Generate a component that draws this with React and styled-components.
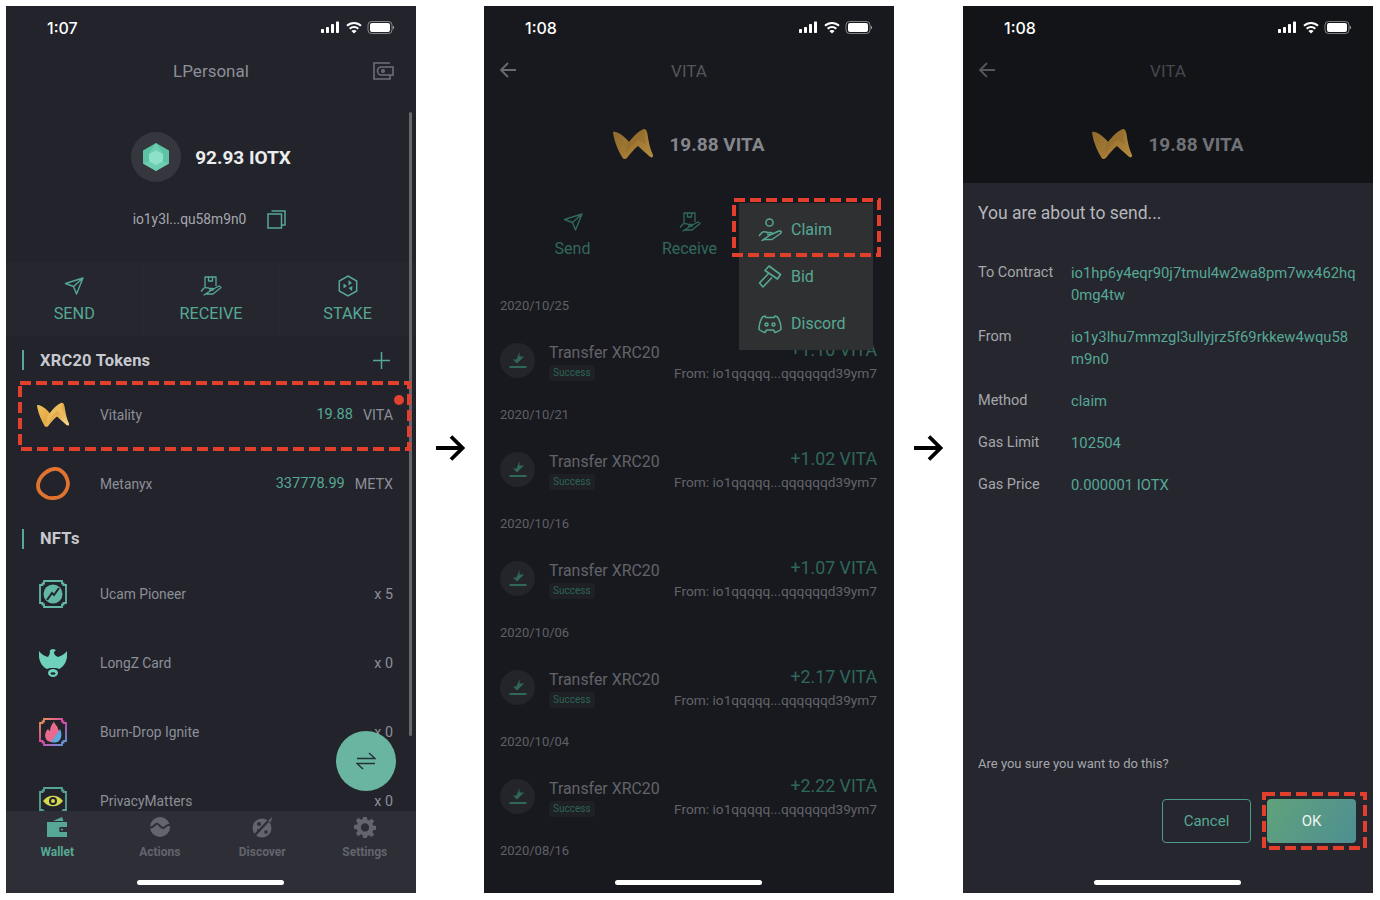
import React from 'react';
import styled, { createGlobalStyle } from 'styled-components';

const TEAL = '#56a895';
const GREY = '#8d8f97';

const GlobalStyle = createGlobalStyle`
  html, body {
    margin: 0;
    background: #fff;
  }
  * {
    box-sizing: border-box;
  }
`;

const Page = styled.div`
  display: flex;
  align-items: flex-start;
  padding: 6px 0 0 6px;
  font-family: Roboto, 'Liberation Sans', sans-serif;
`;

const Phone = styled.div`
  position: relative;
  display: flex;
  flex-direction: column;
  flex: none;
  width: 410px;
  height: 887px;
  overflow: hidden;
  background: ${(p) => p.$bg};
`;

const FlowArrow = styled.div`
  flex: none;
  display: flex;
  align-items: center;
  justify-content: center;
  width: ${(p) => p.$w}px;
  height: 884px;
`;

const StatusBar = styled.div`
  flex: none;
  display: flex;
  align-items: center;
  justify-content: space-between;
  height: 44px;
  padding: 0 21px 0 41px;
  color: #fff;
  font-family: Inter, Roboto, sans-serif;
  font-size: 16px;
  font-weight: 500;
`;

const Header = styled.div`
  flex: none;
  position: relative;
  display: flex;
  align-items: center;
  justify-content: center;
  height: 42px;
  font-size: 17px;
  color: ${(p) => p.$color};
`;

const HeaderLeft = styled.div`
  position: absolute;
  left: 15px;
  top: 11px;
  display: flex;
`;

const HeaderRight = styled.div`
  position: absolute;
  right: 22px;
  top: 12px;
  display: flex;
`;

const Balance = styled.div`
  flex: none;
  display: flex;
  flex-direction: column;
  align-items: center;
  height: 170px;
  padding-top: 40px;
`;

const BalanceTop = styled.div`
  display: flex;
  align-items: center;
  gap: 14px;
  color: #eceded;
  font-size: 19px;
  font-weight: 700;
`;

const CoinCircle = styled.div`
  display: flex;
  align-items: center;
  justify-content: center;
  width: 50px;
  height: 50px;
  border-radius: 50%;
  background: #35363e;
`;

const Address = styled.div`
  display: flex;
  align-items: center;
  gap: 21px;
  margin: 27px 3px 0 0;
  font-size: 13.8px;
  line-height: 20px;
  color: #a6a8ae;
`;

const ActionBar = styled.div`
  flex: none;
  display: grid;
  grid-template-columns: repeat(3, 1fr);
  height: 74px;
  background: #25262e;
`;

const ActionCell = styled.div`
  display: flex;
  flex-direction: column;
  align-items: center;
  padding-top: 12px;
  gap: 6px;
  color: ${TEAL};
  font-size: 16.3px;
  line-height: 20px;
  & + & {
    box-shadow: inset 1px 0 0 #282932;
  }
`;

const IconSlot = styled.span`
  display: flex;
  align-items: center;
  justify-content: center;
  height: ${(p) => p.$h}px;
`;

const List = styled.div`
  flex: 1;
  min-height: 0;
  overflow: hidden;
`;

const SectionHead = styled.div`
  display: flex;
  align-items: center;
  height: ${(p) => p.$h}px;
  padding: ${(p) => p.$top}px 26px 0 16px;
  color: #c8c9cf;
  font-size: 16.5px;
  letter-spacing: 0.2px;
  font-weight: 700;
`;

const SectionMark = styled.span`
  width: 2px;
  height: 20px;
  margin-right: 16px;
  background: ${TEAL};
`;

const SectionAdd = styled.span`
  display: flex;
  margin-left: auto;
`;

const TokenRow = styled.div`
  display: flex;
  align-items: center;
  height: 69px;
  padding: 0 23px 0 27px;
  color: ${GREY};
  font-size: 13.8px;
`;

const TokenIcon = styled.span`
  display: flex;
  align-items: center;
  justify-content: center;
  flex: none;
  width: 40px;
  margin-right: 27px;
`;

const TokenAmount = styled.span`
  margin-left: auto;
  color: ${TEAL};
  font-size: 14.5px;
`;

const TokenUnit = styled.span`
  margin-left: ${(p) => (p.$first ? 'auto' : '10px')};
  font-size: 14.3px;
`;

const TabBar = styled.div`
  flex: none;
  display: grid;
  grid-template-columns: repeat(4, 1fr);
  height: 82px;
  padding-top: 5px;
  background: #2e2f36;
`;

const TabItem = styled.div`
  display: flex;
  flex-direction: column;
  align-items: center;
  gap: 6px;
  color: ${(p) => (p.$active ? TEAL : '#62646e')};
  font-size: 12px;
  font-weight: 700;
  line-height: 16px;
`;

const HomeBar = styled.div`
  position: absolute;
  left: 131px;
  bottom: 8px;
  width: 147px;
  height: 5px;
  border-radius: 3px;
  background: #fff;
`;

const ScrollThumb = styled.div`
  position: absolute;
  right: 4px;
  top: 106px;
  width: 3px;
  height: 624px;
  border-radius: 2px;
  background: #66676c;
`;

const Fab = styled.div`
  position: absolute;
  right: 20px;
  bottom: 102px;
  display: flex;
  align-items: center;
  justify-content: center;
  width: 60px;
  height: 60px;
  border-radius: 50%;
  background: #6ab4a2;
`;

const RedDot = styled.div`
  position: absolute;
  left: 388px;
  top: 389px;
  width: 10px;
  height: 10px;
  border-radius: 50%;
  background: #e2432e;
`;

const DashFrame = styled.svg`
  position: absolute;
  left: ${(p) => p.$x}px;
  top: ${(p) => p.$y}px;
  z-index: 5;
`;

const Hero = styled.div`
  flex: none;
  display: flex;
  align-items: center;
  justify-content: center;
  gap: 16px;
  height: 60px;
  margin-top: 22px;
  font-size: 19px;
  font-weight: 700;
  color: ${(p) => p.$color};
`;

const HeroActions = styled.div`
  flex: none;
  display: grid;
  grid-template-columns: repeat(3, 117px);
  height: 117px;
  padding: 36px 0 0 30px;
`;

const HeroAction = styled.div`
  display: flex;
  flex-direction: column;
  align-items: center;
  gap: 5px;
  color: #30695c;
  font-size: 16px;
  line-height: 20px;
`;

const Transfers = styled.div`
  flex: 1;
  min-height: 0;
  overflow: hidden;
  padding: 0 17px 0 16px;
`;

const DateLabel = styled.div`
  height: 30px;
  line-height: 30px;
  font-size: 13px;
  color: #5f6066;
`;

const TransferRow = styled.div`
  display: flex;
  align-items: center;
  height: 79px;
`;

const TransferIcon = styled.span`
  display: flex;
  align-items: center;
  justify-content: center;
  flex: none;
  width: 35px;
  height: 35px;
  margin-right: 14px;
  border-radius: 50%;
  background: #24252b;
`;

const TransferLeft = styled.div`
  display: flex;
  flex-direction: column;
  align-items: flex-start;
  gap: 2px;
  padding-top: 2px;
`;

const TransferTitle = styled.div`
  font-size: 15.9px;
  line-height: 20px;
  color: #62636a;
`;

const StatusTag = styled.span`
  height: 16px;
  padding: 0 4px;
  border-radius: 3px;
  background: #1e2025;
  color: #2d6355;
  font-size: 10px;
  line-height: 16px;
`;

const TransferRight = styled.div`
  margin-left: auto;
  display: flex;
  flex-direction: column;
  align-items: flex-end;
  gap: 2px;
  margin-top: 1px;
`;

const Amount = styled.div`
  font-size: 17.8px;
  line-height: 22px;
  color: #2f6759;
`;

const FromText = styled.div`
  font-size: 13.7px;
  line-height: 20px;
  color: #62636a;
`;

const Menu = styled.div`
  position: absolute;
  left: 255px;
  top: 197px;
  width: 134px;
  height: 147px;
  padding-top: 3px;
  background: #2f3031;
  z-index: 3;
`;

const MenuItem = styled.div`
  display: flex;
  align-items: center;
  gap: 9px;
  height: 47px;
  padding-left: 19px;
  color: ${TEAL};
  font-size: 16px;
`;

const Sheet = styled.div`
  flex: 1;
  display: flex;
  flex-direction: column;
  margin-top: 9px;
  padding: 19px 17px 50px 15px;
  background: #25262e;
`;

const SheetTitle = styled.div`
  font-size: 17.5px;
  line-height: 22px;
  color: #b5b6bb;
  margin-bottom: 38px;
`;

const InfoRow = styled.div`
  display: grid;
  grid-template-columns: 93px 1fr;
  margin-bottom: 20px;
  font-size: 14.5px;
  line-height: 22px;
  color: #a5a6ac;
`;

const InfoValue = styled.div`
  color: ${TEAL};
  font-size: 14.8px;
  word-break: break-all;
`;

const ConfirmText = styled.div`
  margin-top: auto;
  margin-bottom: 25px;
  font-size: 13px;
  line-height: 20px;
  color: #a5a6ac;
`;

const Buttons = styled.div`
  display: flex;
  justify-content: flex-end;
  gap: 16px;
`;

const Button = styled.div`
  display: flex;
  align-items: center;
  justify-content: center;
  width: 89px;
  height: 44px;
  border-radius: 4px;
  font-size: 15px;
  border: ${(p) => (p.$primary ? 'none' : `1.5px solid #4d9a88`)};
  color: ${(p) => (p.$primary ? '#f0f4f2' : TEAL)};
  background: ${(p) => (p.$primary ? 'linear-gradient(120deg, #5fa27b, #4e8f92)' : 'transparent')};
`;

function StatusIcons() {
  return (
    <svg width="74" height="14" viewBox="0 0 74 14">
      <g fill="#fff">
        <rect x="0" y="8" width="3" height="4" rx="0.7" />
        <rect x="5" y="6" width="3" height="6" rx="0.7" />
        <rect x="10" y="3" width="3" height="9" rx="0.7" />
        <rect x="15" y="0.5" width="3" height="11.5" rx="0.7" />
        <path d="M33 9c-1.100 0-1.900.4-2.600 1l2.600 2.500 2.600-2.500c-.7-.6-1.500-1-2.600-1z" />
        <rect x="49" y="2" width="20" height="9" rx="2" />
        <path d="M71.800 4.800c.8.3 1.300 1 1.300 1.700s-.5 1.400-1.300 1.700z" opacity="0.6" />
      </g>
      <g fill="none" stroke="#fff" strokeWidth="2">
        <path d="M26 4.800a10 10 0 0 1 14 0" />
        <path d="M28.700 7.800a6.100 6.100 0 0 1 8.600 0" />
      </g>
      <rect x="47" y="0.500" width="24" height="12" rx="3.500" fill="none" stroke="#fff" strokeOpacity="0.45" />
    </svg>
  );
}

function WalletOutline() {
  return (
    <svg width="21" height="18" viewBox="0 0 21 18" fill="none" stroke="#6d6f78" strokeWidth="1.6">
      <path d="M17 1H1v16h16v-4" />
      <path d="M20 5H8.500a3.600 3.600 0 0 0 0 8H20z" />
      <circle cx="10" cy="9" r="1.200" />
    </svg>
  );
}

function IotxCoin() {
  return (
    <svg width="28" height="30" viewBox="0 0 28 30">
      <path d="M14 1l13 7.500v13L14 29 1 21.500v-13z" fill="#5cc3a5" />
      <path d="M14 8l7 4v7.500l-7 4-7-4V12z" fill="#8fe0c8" />
      <path d="M14 1l7 11-7-4-7 4zM1 21.500L7 19.500l7 4v5.500zM27 21.500l-6-2-7 4v5.500z" fill="#74d2b7" opacity="0.7" />
    </svg>
  );
}

function CopyIcon() {
  return (
    <svg width="19" height="19" viewBox="0 0 19 19" fill="none" stroke={TEAL} strokeWidth="1.5">
      <rect x="1" y="4" width="13.500" height="14" />
      <path d="M4.500 1H18v14h-3.500" />
    </svg>
  );
}

function SendIcon({ color }) {
  return (
    <svg width="20" height="20" viewBox="0 0 20 20" fill="none" stroke={color} strokeWidth="1.400" strokeLinejoin="round">
      <path d="M1.500 7.500L19 2l-6.500 16-3-7.500zM19 2L9.500 10.500" />
    </svg>
  );
}

function ReceiveIcon({ color }) {
  return (
    <svg width="22" height="20" viewBox="0 0 22 20" fill="none" stroke={color} strokeWidth="1.300" strokeLinejoin="round">
      <path d="M5 11V1h11v9M8.500 1v4h4V1" />
      <path d="M1 15.500l3-3.500c2-1 4 .3 5.500.3h3c1.200 0 1.200 1.700 0 1.700H9" />
      <path d="M12.500 13.500l6.500-3.500 2 1.500-8 6.500H6L4 19z" />
    </svg>
  );
}

function StakeIcon() {
  return (
    <svg width="20" height="22" viewBox="0 0 20 22">
      <path d="M10 1l8.700 5v10L10 21l-8.700-5V6z" fill="none" stroke={TEAL} strokeWidth="1.500" />
      <path d="M10.500 5l3.500 3-3.500 2.500zM9 11l-3.500-2.500v5zM14.500 11l-4 2 3.500 3z" fill={TEAL} />
    </svg>
  );
}

function PlusIcon() {
  return (
    <svg width="17" height="17" viewBox="0 0 17 17" stroke={TEAL} strokeWidth="1.500">
      <path d="M8.500 0v17M0 8.500h17" />
    </svg>
  );
}

function VitaLogo({ width, dim }) {
  const id = dim ? 'vitaDim' : 'vitaBright';
  return (
    <svg width={width} viewBox="0 0 40 32">
      <defs>
        <linearGradient id={id} x1="0" y1="0" x2="1" y2="1">
          <stop offset="0" stopColor={dim ? '#8f6a2c' : '#f2c560'} />
          <stop offset="0.5" stopColor={dim ? '#a07733' : '#e3a844'} />
          <stop offset="1" stopColor={dim ? '#b58d42' : '#f7dc94'} />
        </linearGradient>
      </defs>
      <path
        d="M0 4C4 3 11 8 16 14 20 9 25 3 31 1 33 1 34 3 34.500 6 35.500 13 37 21 40 27 40.500 30 38 30 36 28 32 24 28 21 25 18 21 21 17 26 14 30 12 32 10 31 9 29 5 22 1 13 0 4Z"
        fill={`url(#${id})`}
      />
      <path
        d="M16 14C20 9 25 3 31 1 31 6 32 12 33 17 30 15 27 13 25 12 21 15 16 21 13 25 12 20 13 17 16 14Z"
        fill={dim ? '#8a6529' : '#f9d987'}
        opacity="0.35"
      />
    </svg>
  );
}

function MetanyxLogo() {
  return (
    <svg width="34" height="35" viewBox="0 0 34 35">
      <path
        d="M18 3C25 2 31 9 32 17 32 25 26 32 18 32 10 33 2 27 2 20 2 12 10 4 18 3Z"
        fill="none"
        stroke="#e0732f"
        strokeWidth="3.800"
      />
    </svg>
  );
}

function OctFrame({ stroke, children }) {
  return (
    <svg width="28" height="28" viewBox="0 0 28 28">
      <path
        d="M5 1h18v2.500h1.500V5H27v18h-2.500v1.500H23V27H5v-2.500H3.500V23H1V5h2.500V3.500H5z"
        fill="none"
        stroke={stroke}
        strokeWidth="1.800"
      />
      {children}
    </svg>
  );
}

function UcamLogo() {
  return (
    <OctFrame stroke="#63b8a5">
      <circle cx="14" cy="14" r="9.500" fill="#63b8a5" />
      <path d="M8 20l5-7 2 2 5-7" stroke="#23242c" strokeWidth="2" fill="none" />
    </OctFrame>
  );
}

function LongzLogo() {
  return (
    <svg width="28" height="30" viewBox="0 0 28 30">
      <path
        d="M0 3C2 6 5 8 9 9 10 7 11 6 11 4 10 3 12 1 14 1L17 2 15 4C15 6 16 8 19 9 22 8 26 6 28 3 29 11 26 18 20 21L17 20H11L8 21C2 18-1 11 0 3Z"
        fill="#6fd0bb"
      />
      <ellipse cx="14" cy="25" rx="5" ry="4" fill="#6fd0bb" />
      <ellipse cx="14" cy="25.500" rx="2.500" ry="1.300" fill="#23242c" />
    </svg>
  );
}

function BurnLogo() {
  return (
    <OctFrame stroke="url(#burnFrame)">
      <defs>
        <linearGradient id="burnFrame" x1="0" y1="0" x2="1" y2="1">
          <stop offset="0" stopColor="#e89a54" />
          <stop offset="0.5" stopColor="#d949a8" />
          <stop offset="1" stopColor="#4fa3e0" />
        </linearGradient>
      </defs>
      <path d="M15 3.500C16 7 19 8 19 11 21 14 22 19 19 22 16 25 9 25 7 21 5 17 7 13 9 11 10 12 10 13 11 13 11 9 13 6 15 3.500Z" fill="#e86a8e" />
      <path d="M21 11C23 15 23 20 20 23 17 25 13 25 12 23 15 22 15 19 17 17 19 15 20 13 21 11Z" fill="#5aa9e0" />
    </OctFrame>
  );
}

function PrivacyLogo() {
  return (
    <OctFrame stroke="#55a593">
      <path d="M4 14c5-7 15-7 20 0-5 7-15 7-20 0z" fill="#d5d84f" />
      <circle cx="14" cy="14" r="4" fill="#23242c" />
      <circle cx="14" cy="14" r="2" fill="#d5d84f" />
    </OctFrame>
  );
}

function SwapIcon() {
  return (
    <svg width="20" height="18" viewBox="0 0 20 18" fill="none" stroke="#24303a" strokeWidth="1.500">
      <path d="M1 6.500h18L13 1M19 11.500H1L7 17" />
    </svg>
  );
}

function WalletTab() {
  return (
    <svg width="22" height="22" viewBox="0 0 22 22" fill={TEAL}>
      <path d="M7 5l9-4 1.500 4z" />
      <path d="M1 6h20v5h-6a2.500 2.500 0 0 0 0 5h6v5H1z" />
      <circle cx="12" cy="13.500" r="1.600" />
      <circle cx="16" cy="13.500" r="1" />
    </svg>
  );
}

function ActionsTab() {
  return (
    <svg width="22" height="22" viewBox="0 0 22 22">
      <circle cx="11" cy="11" r="10" fill="#62646e" />
      <path d="M0 12c3 0 4-1 6-3s2-2 5 1 4 2 5 1 3-3 6-2" fill="none" stroke="#2e2f36" strokeWidth="2" />
    </svg>
  );
}

function DiscoverTab() {
  return (
    <svg width="22" height="22" viewBox="0 0 22 22">
      <circle cx="11" cy="12" r="9.500" fill="#62646e" />
      <path d="M2 21L21 1" stroke="#2e2f36" strokeWidth="2.500" />
      <path d="M17 5l4-4-1 5z" fill="#62646e" />
      <circle cx="8" cy="8" r="2" fill="#2e2f36" />
      <circle cx="15" cy="16" r="1.800" fill="#2e2f36" />
      <circle cx="7" cy="14" r="1" fill="#2e2f36" />
    </svg>
  );
}

function SettingsTab() {
  return (
    <svg width="22" height="22" viewBox="0 0 24 24">
      <path
        fill="#62646e"
        fillRule="evenodd"
        d="M10 1h4l.6 3.200 1.900.8L19.200 3l2.800 2.800-2 2.700.8 1.900L24 11v4l-3.200.6-.8 1.900 2 2.700-2.800 2.800-2.700-2-1.900.8L14 24h-4l-.6-3.200-1.900-.8-2.700 2L2 19.200l2-2.700-.8-1.900L0 14v-4l3.200-.6.8-1.900-2-2.700L4.800 2l2.700 2 1.900-.8zM12 8a4.500 4.500 0 1 0 0 9 4.500 4.500 0 0 0 0-9z"
      />
    </svg>
  );
}

function BackArrow({ color }) {
  return (
    <svg width="18" height="18" viewBox="0 0 18 18" fill="none" stroke={color} strokeWidth="1.800">
      <path d="M17 9H2M9 2L2 9l7 7" />
    </svg>
  );
}

function DownloadIcon() {
  return (
    <svg width="18" height="20" viewBox="0 0 18 20" fill="#2f6759">
      <path d="M10.500 1v4.500H15L8 12.500 4 8.500h3.500z" />
      <rect x="0.500" y="15" width="17" height="2" />
    </svg>
  );
}

function ClaimIcon() {
  return (
    <svg width="24" height="23" viewBox="0 0 24 23" fill="none" stroke={TEAL} strokeWidth="1.500" strokeLinejoin="round">
      <circle cx="11.500" cy="4.500" r="3.600" />
      <path d="M1 18l3-3.500c2-1.500 4-.5 6 0h3c1.500 0 1.500 2 0 2H9" />
      <path d="M13 16.500l8-3.500c2-.5 3 1 1.500 2.500L14 21.500H6l-2 1z" />
    </svg>
  );
}

function BidIcon() {
  return (
    <svg width="24" height="23" viewBox="0 0 24 23" fill="none" stroke={TEAL} strokeWidth="1.600" strokeLinejoin="round">
      <path d="M11 1l11.500 8.500L19.500 14 7 5.500z" />
      <path d="M10.500 8.500L1.500 18l3.500 4 9-9.500" />
    </svg>
  );
}

function DiscordIcon() {
  return (
    <svg width="24" height="20" viewBox="0 0 24 20" fill="none" stroke={TEAL} strokeWidth="1.500" strokeLinejoin="round">
      <path d="M7 2L4.500 3C2.500 6 1 10 1 15.500c2 1.500 4 2.500 6 3l1.500-2.500h7L17 18.500c2-.5 4-1.500 6-3C23 10 21.500 6 19.500 3L17 2l-1 1.500H8z" />
      <circle cx="8.500" cy="10.500" r="1.500" />
      <circle cx="15.500" cy="10.500" r="1.500" />
    </svg>
  );
}

function FlowArrowIcon() {
  return (
    <svg width="29" height="26" viewBox="0 0 29 26" fill="none" stroke="#000" strokeWidth="3.800">
      <path d="M0 13h26M15 1.500L26.500 13 15 24.500" />
    </svg>
  );
}

function DashBox({ x, y, w, h }) {
  return (
    <DashFrame $x={x} $y={y} width={w} height={h}>
      <rect
        x="2"
        y="2"
        width={w - 4}
        height={h - 4}
        fill="none"
        stroke="#e2402c"
        strokeWidth="4"
        strokeDasharray="11 5"
      />
    </DashFrame>
  );
}

const TOKENS = [
  { name: 'Vitality', amount: '19.88', unit: 'VITA', icon: <VitaLogo width={32} /> },
  { name: 'Metanyx', amount: '337778.99', unit: 'METX', icon: <MetanyxLogo /> },
];

const NFTS = [
  { name: 'Ucam Pioneer', count: 'x 5', icon: <UcamLogo /> },
  { name: 'LongZ Card', count: 'x 0', icon: <LongzLogo /> },
  { name: 'Burn-Drop Ignite', count: 'x 0', icon: <BurnLogo /> },
  { name: 'PrivacyMatters', count: 'x 0', icon: <PrivacyLogo /> },
];

const TABS = [
  { label: 'Wallet', icon: <WalletTab />, active: true },
  { label: 'Actions', icon: <ActionsTab /> },
  { label: 'Discover', icon: <DiscoverTab /> },
  { label: 'Settings', icon: <SettingsTab /> },
];

const TRANSFERS = [
  { date: '2020/10/25', amount: '+1.10 VITA' },
  { date: '2020/10/21', amount: '+1.02 VITA' },
  { date: '2020/10/16', amount: '+1.07 VITA' },
  { date: '2020/10/06', amount: '+2.17 VITA' },
  { date: '2020/10/04', amount: '+2.22 VITA' },
  { date: '2020/08/16' },
];

const INFO = [
  { label: 'To Contract', value: 'io1hp6y4eqr90j7tmul4w2wa8pm7wx462hq0mg4tw' },
  { label: 'From', value: 'io1y3lhu7mmzgl3ullyjrz5f69rkkew4wqu58m9n0' },
  { label: 'Method', value: 'claim' },
  { label: 'Gas Limit', value: '102504' },
  { label: 'Gas Price', value: '0.000001 IOTX' },
];

function WalletScreen() {
  return (
    <Phone $bg="#22232b">
      <StatusBar>
        <span>1:07</span>
        <StatusIcons />
      </StatusBar>
      <Header $color={GREY}>
        LPersonal
        <HeaderRight>
          <WalletOutline />
        </HeaderRight>
      </Header>
      <Balance>
        <BalanceTop>
          <CoinCircle>
            <IotxCoin />
          </CoinCircle>
          92.93 IOTX
        </BalanceTop>
        <Address>
          io1y3l...qu58m9n0
          <CopyIcon />
        </Address>
      </Balance>
      <ActionBar>
        <ActionCell>
          <IconSlot $h={24}>
            <SendIcon color={TEAL} />
          </IconSlot>
          SEND
        </ActionCell>
        <ActionCell>
          <IconSlot $h={24}>
            <ReceiveIcon color={TEAL} />
          </IconSlot>
          RECEIVE
        </ActionCell>
        <ActionCell>
          <IconSlot $h={24}>
            <StakeIcon />
          </IconSlot>
          STAKE
        </ActionCell>
      </ActionBar>
      <List>
        <SectionHead $h={44} $top={4}>
          <SectionMark />
          XRC20 Tokens
          <SectionAdd>
            <PlusIcon />
          </SectionAdd>
        </SectionHead>
        {TOKENS.map((t) => (
          <TokenRow key={t.name}>
            <TokenIcon>{t.icon}</TokenIcon>
            {t.name}
            <TokenAmount>{t.amount}</TokenAmount>
            <TokenUnit>{t.unit}</TokenUnit>
          </TokenRow>
        ))}
        <SectionHead $h={41} $top={0}>
          <SectionMark />
          NFTs
        </SectionHead>
        {NFTS.map((n) => (
          <TokenRow key={n.name}>
            <TokenIcon>{n.icon}</TokenIcon>
            {n.name}
            <TokenUnit $first>{n.count}</TokenUnit>
          </TokenRow>
        ))}
      </List>
      <TabBar>
        {TABS.map((t) => (
          <TabItem key={t.label} $active={t.active}>
            <IconSlot $h={22}>{t.icon}</IconSlot>
            {t.label}
          </TabItem>
        ))}
      </TabBar>
      <ScrollThumb />
      <Fab>
        <SwapIcon />
      </Fab>
      <RedDot />
      <DashBox x={12} y={375} w={393} h={70} />
      <HomeBar />
    </Phone>
  );
}

function TokenScreen() {
  return (
    <Phone $bg="#18191e">
      <StatusBar>
        <span>1:08</span>
        <StatusIcons />
      </StatusBar>
      <Header $color="#55565c">
        <HeaderLeft>
          <BackArrow color="#6a6b70" />
        </HeaderLeft>
        VITA
      </Header>
      <Hero $color="#85868b">
        <VitaLogo width={40} dim />
        19.88 VITA
      </Hero>
      <HeroActions>
        <HeroAction>
          <IconSlot $h={24}>
            <SendIcon color="#30695c" />
          </IconSlot>
          Send
        </HeroAction>
        <HeroAction>
          <IconSlot $h={24}>
            <ReceiveIcon color="#30695c" />
          </IconSlot>
          Receive
        </HeroAction>
      </HeroActions>
      <Transfers>
        {TRANSFERS.map((t) => (
          <div key={t.date}>
            <DateLabel>{t.date}</DateLabel>
            {t.amount && (
              <TransferRow>
                <TransferIcon>
                  <DownloadIcon />
                </TransferIcon>
                <TransferLeft>
                  <TransferTitle>Transfer XRC20</TransferTitle>
                  <StatusTag>Success</StatusTag>
                </TransferLeft>
                <TransferRight>
                  <Amount>{t.amount}</Amount>
                  <FromText>From: io1qqqqq...qqqqqqd39ym7</FromText>
                </TransferRight>
              </TransferRow>
            )}
          </div>
        ))}
      </Transfers>
      <Menu>
        <MenuItem>
          <ClaimIcon />
          Claim
        </MenuItem>
        <MenuItem>
          <BidIcon />
          Bid
        </MenuItem>
        <MenuItem>
          <DiscordIcon />
          Discord
        </MenuItem>
      </Menu>
      <DashBox x={248} y={192} w={149} h={59} />
      <HomeBar />
    </Phone>
  );
}

function ConfirmScreen() {
  return (
    <Phone $bg="#131418">
      <StatusBar>
        <span>1:08</span>
        <StatusIcons />
      </StatusBar>
      <Header $color="#47484e">
        <HeaderLeft>
          <BackArrow color="#55565c" />
        </HeaderLeft>
        VITA
      </Header>
      <Hero $color="#707176">
        <VitaLogo width={40} dim />
        19.88 VITA
      </Hero>
      <Sheet>
        <SheetTitle>You are about to send...</SheetTitle>
        {INFO.map((r) => (
          <InfoRow key={r.label}>
            {r.label}
            <InfoValue>{r.value}</InfoValue>
          </InfoRow>
        ))}
        <ConfirmText>Are you sure you want to do this?</ConfirmText>
        <Buttons>
          <Button>Cancel</Button>
          <Button $primary>OK</Button>
        </Buttons>
      </Sheet>
      <DashBox x={299} y={786} w={105} h={58} />
      <HomeBar />
    </Phone>
  );
}

export default function App() {
  return (
    <Page>
      <GlobalStyle />
      <WalletScreen />
      <FlowArrow $w={68}>
        <FlowArrowIcon />
      </FlowArrow>
      <TokenScreen />
      <FlowArrow $w={69}>
        <FlowArrowIcon />
      </FlowArrow>
      <ConfirmScreen />
    </Page>
  );
}
